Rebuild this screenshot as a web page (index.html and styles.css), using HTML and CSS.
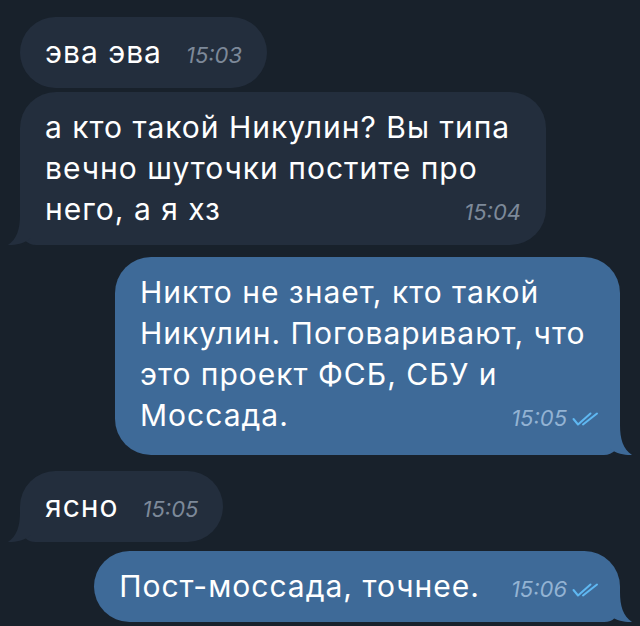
FILE: index.html
```html
<!DOCTYPE html>
<html lang="ru">
<head>
  <meta charset="UTF-8" />
  <meta name="viewport" content="width=device-width, initial-scale=1" />
  <title>Чат</title>
  <link rel="stylesheet" href="styles.css">
</head>
<body>
  <div class="chat">
    <div class="msg in">
      <p class="text">эва эва<span class="meta"><span class="time">15:03</span></span></p>
    </div>
    <div class="msg in cont tail">
      <p class="text">а кто такой Никулин? Вы типа вечно шуточки постите про него, а я хз<span class="meta"><span class="time">15:04</span></span></p>
      <svg class="tail-shape" viewBox="0 0 30 30" width="30" height="30"><path d="M12 0 C12 14 9 24 0 30 C8 30.5 17 28 23 23 L30 23 L30 0 Z"/></svg>
    </div>
    <div class="msg out tail narrow">
      <p class="text">Никто не знает, кто такой Никулин. Поговаривают, что это проект ФСБ, СБУ и Моссада.<span class="meta"><span class="time">15:05</span><svg class="check" viewBox="0 0 28 14" width="28" height="14"><path d="M1.5 7 L6 12.5 L18.5 1.5 M11 12.5 L25 1.5"/></svg></span></p>
      <svg class="tail-shape" viewBox="0 0 30 30" width="30" height="30"><path d="M12 0 C12 14 9 24 0 30 C8 30.5 17 28 23 23 L30 23 L30 0 Z"/></svg>
    </div>
    <div class="msg in tail spaced">
      <p class="text">ясно<span class="meta"><span class="time">15:05</span></span></p>
      <svg class="tail-shape" viewBox="0 0 30 30" width="30" height="30"><path d="M12 0 C12 14 9 24 0 30 C8 30.5 17 28 23 23 L30 23 L30 0 Z"/></svg>
    </div>
    <div class="msg out tail">
      <p class="text">Пост-моссада, точнее.<span class="meta"><span class="time">15:06</span><svg class="check" viewBox="0 0 28 14" width="28" height="14"><path d="M1.5 7 L6 12.5 L18.5 1.5 M11 12.5 L25 1.5"/></svg></span></p>
      <svg class="tail-shape" viewBox="0 0 30 30" width="30" height="30"><path d="M12 0 C12 14 9 24 0 30 C8 30.5 17 28 23 23 L30 23 L30 0 Z"/></svg>
    </div>
  </div>
</body>
</html>
```

FILE: styles.css
```css
* {
  box-sizing: border-box;
}
html, body {
  height: 100%;
}
body {
  margin: 0;
  background: #18212b;
  color: #fff;
  font-family: Inter, 'Noto Sans', sans-serif;
  overflow: hidden;
}
.chat {
  display: flex;
  flex-direction: column;
  align-items: flex-start;
  padding: 17px 20px 0;
}
.msg {
  position: relative;
  margin-top: 12px;
  border-radius: 36px;
  padding: 15px 25px 15px 25px;
}
.msg:first-child {
  margin-top: 0;
}
.msg.cont {
  margin-top: 4px;
}
.msg.spaced {
  margin-top: 16px;
}
.msg.spaced + .msg {
  margin-top: 9px;
}
.msg.in {
  background: #232e3d;
  max-width: 526px;
}
.msg.out {
  align-self: flex-end;
  background: #3e6a98;
  max-width: 526px;
  padding-right: 20px;
}
.msg.narrow {
  max-width: 505px;
  padding-bottom: 19px;
}
.msg.in.tail {
  border-bottom-left-radius: 16px;
}
.msg.out.tail {
  border-bottom-right-radius: 16px;
}
.text {
  margin: 0;
  font-size: 30px;
  letter-spacing: 1px;
  line-height: 41px;
  display: flow-root;
}
.meta {
  float: right;
  display: flex;
  align-items: center;
  gap: 5px;
  margin: 6px 0 0 24px;
  height: 35px;
  letter-spacing: 0;
}
.out .meta {
  margin-left: 31px;
}
.time {
  font-size: 22px;
  font-style: italic;
  color: #7d8999;
}
.out .time {
  color: #93b3d3;
}
.check {
  fill: none;
  stroke: #5fb8f2;
  stroke-width: 2;
  stroke-linecap: round;
  stroke-linejoin: round;
}
.tail-shape {
  position: absolute;
  bottom: 0;
  left: -12px;
}
.in .tail-shape {
  fill: #232e3d;
}
.out .tail-shape {
  fill: #3e6a98;
  left: auto;
  right: -12px;
  transform: scaleX(-1);
}
```
